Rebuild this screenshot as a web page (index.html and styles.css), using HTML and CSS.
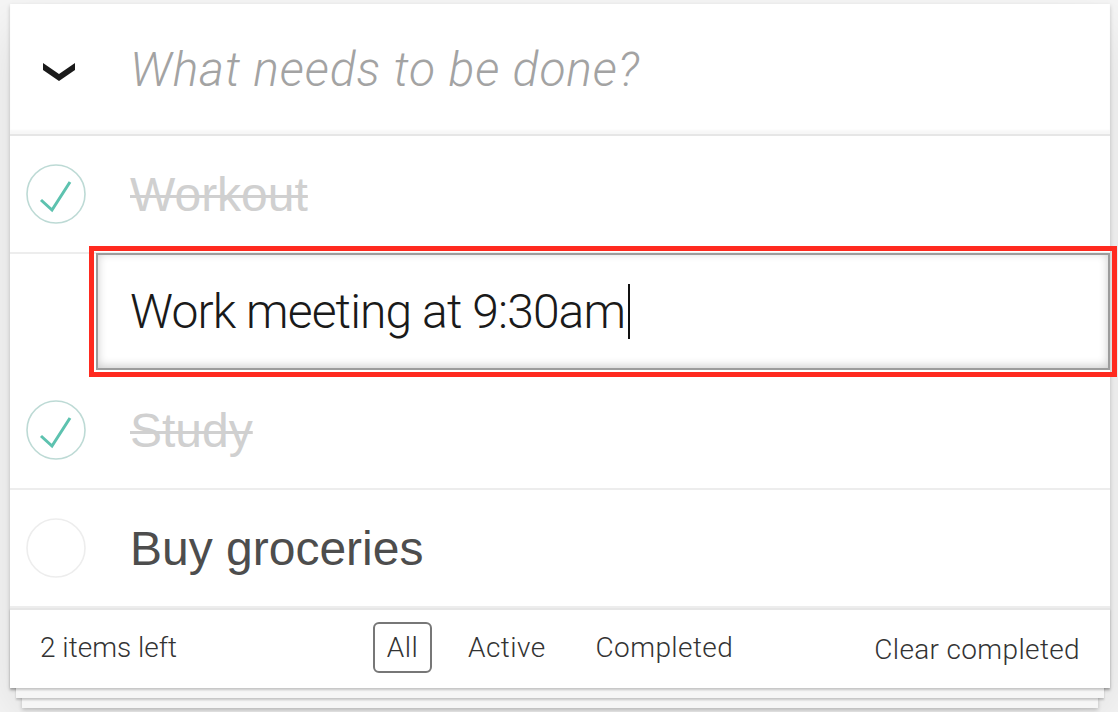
FILE: index.html
```html
<!DOCTYPE html>
<html lang="en">
<head>
<meta charset="utf-8">
<title>Todos</title>
<link rel="stylesheet" href="styles.css">
</head>
<body>
<section class="todoapp">
  <header class="header">
    <span class="toggle-all">
      <svg width="32" height="18" viewBox="0 0 32 18"><polygon points="0,0 16,11 32,0 32,7 16,18 0,7" fill="#1a1a1a"/></svg>
    </span>
    <input class="new-todo" placeholder="What needs to be done?">
  </header>
  <ul class="todo-list">
    <li class="todo completed">
      <span class="check"><svg width="60" height="60" viewBox="0 0 60 60"><circle cx="30" cy="30" r="29" fill="none" stroke="#bddad5" stroke-width="1.6"/><polyline points="15,36 26,46 44,18" fill="none" stroke="#5dc2af" stroke-width="3"/></svg></span>
      <span class="label">Workout</span>
    </li>
    <li class="todo editing">
      <div class="edit">Work meeting at 9:30am<span class="caret"></span></div>
    </li>
    <li class="todo completed">
      <span class="check"><svg width="60" height="60" viewBox="0 0 60 60"><circle cx="30" cy="30" r="29" fill="none" stroke="#bddad5" stroke-width="1.6"/><polyline points="15,36 26,46 44,18" fill="none" stroke="#5dc2af" stroke-width="3"/></svg></span>
      <span class="label">Study</span>
    </li>
    <li class="todo">
      <span class="check"><svg width="60" height="60" viewBox="0 0 60 60"><circle cx="30" cy="30" r="29" fill="none" stroke="#ededed" stroke-width="1.6"/></svg></span>
      <span class="label">Buy groceries</span>
    </li>
  </ul>
  <footer class="footer">
    <span class="count">2 items left</span>
    <ul class="filters">
      <li><a class="selected">All</a></li>
      <li><a>Active</a></li>
      <li><a>Completed</a></li>
    </ul>
    <span class="clear">Clear completed</span>
  </footer>
</section>
</body>
</html>
```

FILE: styles.css
```css
html, body {
  margin: 0;
  padding: 0;
}

body {
  background: #f5f5f5;
  font-family: Roboto, "Liberation Sans", sans-serif;
  font-weight: 300;
  color: #4d4d4d;
  width: 1118px;
  height: 712px;
  overflow: hidden;
}

.todoapp {
  margin: 4px 0 0 10px;
  width: 1100px;
  background: #fff;
  box-shadow: 0 2px 4px rgba(0, 0, 0, 0.2), 0 25px 50px rgba(0, 0, 0, 0.1);
}

.header {
  height: 130px;
  display: flex;
  align-items: center;
  box-shadow: inset 0 -4px 2px rgba(0, 0, 0, 0.03);
}

.toggle-all {
  width: 120px;
  display: flex;
  padding-left: 33px;
  box-sizing: border-box;
  margin-top: 6px;
}

.toggle-all svg {
  display: block;
}

.new-todo {
  flex: 1;
  border: 0;
  outline: none;
  background: transparent;
  font-family: Roboto, "Liberation Sans", sans-serif;
  font-weight: 300;
  font-size: 48px;
  letter-spacing: 0.9px;
  padding: 0;
  color: #4d4d4d;
}

.new-todo::placeholder {
  font-style: italic;
  color: #a3a3a3;
  font-weight: 300;
}

.todo-list {
  list-style: none;
  margin: 0;
  padding: 0;
  border-top: 2px solid #e6e6e6;
}

.todo {
  height: 116px;
  border-bottom: 2px solid #ededed;
  display: flex;
  align-items: center;
}

.check {
  width: 120px;
  display: flex;
  padding-left: 16px;
  box-sizing: border-box;
}

.check svg {
  display: block;
}

.label {
  font-family: "Liberation Sans", Arial, sans-serif;
  font-weight: 400;
  font-size: 48px;
  color: #4d4d4d;
  line-height: 1.2;
  margin-top: 2px;
}

.completed .label {
  color: #d0d0d0;
  text-decoration: line-through;
  text-decoration-thickness: 3px;
}

.todo.editing {
  height: 118px;
  border-bottom: 0;
  align-items: flex-start;
}

.edit {
  margin: -1px 0 0 86px;
  width: 1014px;
  height: 117px;
  box-sizing: border-box;
  border: 2px solid #9c9c9c;
  box-shadow: inset 0 -2px 10px rgba(0, 0, 0, 0.2);
  outline: 5px solid #ff2a1f;
  outline-offset: 2px;
  padding-left: 32px;
  display: flex;
  align-items: center;
  font-family: Roboto, "Liberation Sans", sans-serif;
  font-weight: 300;
  font-size: 48px;
  letter-spacing: -0.9px;
  color: #1a1a1a;
  position: relative;
  z-index: 1;
  background: #fff;
}

.caret {
  display: inline-block;
  width: 2px;
  height: 55px;
  background: #111;
  margin-left: 3px;
}

.footer {
  height: 78px;
  border-top: 2px solid #e6e6e6;
  padding: 0 30px;
  display: grid;
  grid-template-columns: 1fr auto 1fr;
  align-items: center;
  font-size: 28px;
  color: #333;
  font-weight: 300;
  background: #fff;
  box-shadow: 0 2px 2px rgba(0, 0, 0, 0.2),
    0 16px 0 -6px #f6f6f6,
    0 18px 2px -6px rgba(0, 0, 0, 0.2),
    0 32px 0 -12px #f6f6f6,
    0 34px 4px -12px rgba(0, 0, 0, 0.2);
}

.count {
  justify-self: start;
  margin-top: -4px;
}

.filters {
  list-style: none;
  margin: -4px 0 0 0;
  padding: 0;
  display: flex;
  gap: 22px;
  letter-spacing: 0.4px;
}

.filters a {
  display: block;
  padding: 7px 12px;
  border: 2px solid transparent;
  border-radius: 6px;
  color: #333;
}

.filters a.selected {
  border-color: #777;
}

.clear {
  justify-self: end;
  margin-top: 0;
  letter-spacing: 0.35px;
}
```
